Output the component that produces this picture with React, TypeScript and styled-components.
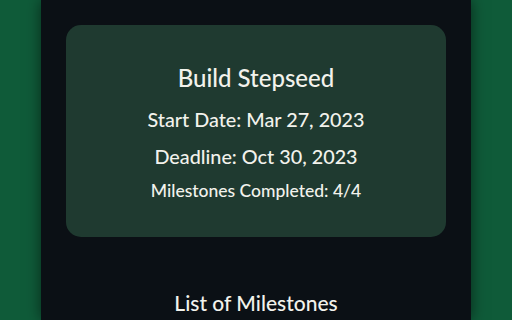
import styled, { createGlobalStyle } from "styled-components";

const Global = createGlobalStyle`
  html, body {
    margin: 0;
    padding: 0;
    background: #0f5b39;
  }
  body {
    font-family: "Lato", "Noto Sans", sans-serif;
    color: #f2f2ec;
  }
`;

const Page = styled.main`
  width: 430px;
  min-height: 320px;
  margin: 0 auto;
  padding: 25px 25px 0;
  box-sizing: border-box;
  background: #0b1015;
  box-shadow: 0 0 14px rgba(0, 0, 0, 0.55);
`;

const Card = styled.section`
  display: flex;
  flex-direction: column;
  align-items: center;
  gap: 11px;
  padding: 38px 20px 35px;
  border-radius: 15px;
  background: #1f3a30;
`;

const Title = styled.h1`
  margin: 0 0 2px;
  font-size: 24px;
  line-height: 30px;
  font-weight: 500;
`;

const Info = styled.p<{ $small?: boolean }>`
  margin: 0;
  font-size: ${(p) => (p.$small ? "17.5px" : "19.8px")};
  line-height: ${(p) => (p.$small ? "22px" : "26px")};
  font-weight: 500;
`;

const Heading = styled.h2`
  margin: 52px 0 0;
  text-align: center;
  font-size: 21px;
  line-height: 28px;
  font-weight: 500;
`;

export default function App() {
  return (
    <>
      <Global />
      <Page>
        <Card>
          <Title>Build Stepseed</Title>
          <Info>Start Date: Mar 27, 2023</Info>
          <Info>Deadline: Oct 30, 2023</Info>
          <Info $small>Milestones Completed: 4/4</Info>
        </Card>
        <Heading>List of Milestones</Heading>
      </Page>
    </>
  );
}
